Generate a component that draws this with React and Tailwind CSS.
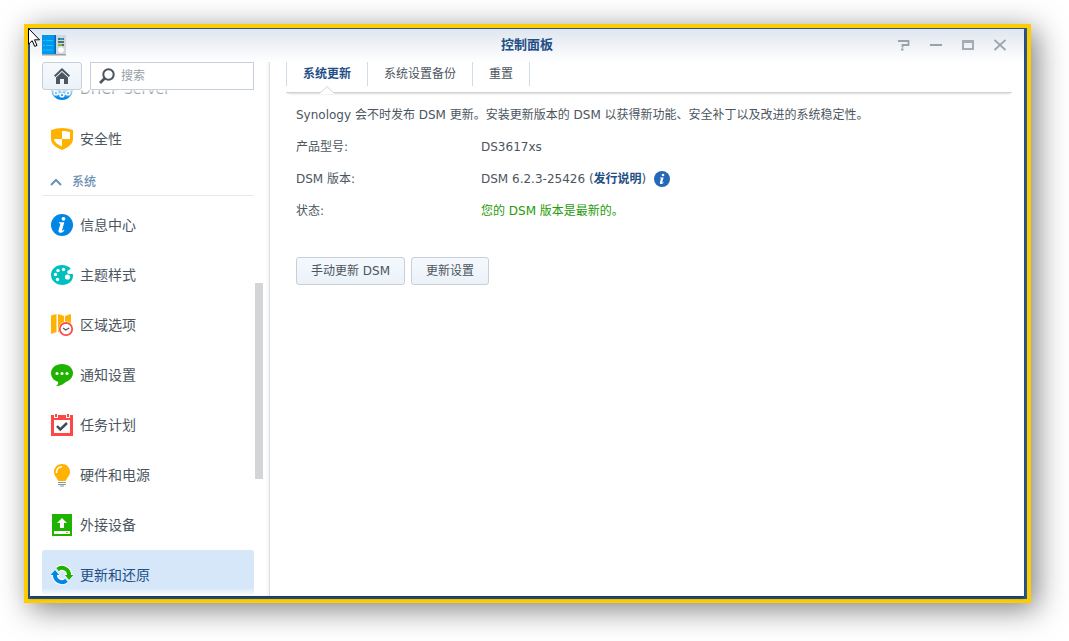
import { useLayoutEffect, useRef, useState } from "react"

const DhcpIcon = () => (
  <svg viewBox="0 0 24 24" className="size-6 shrink-0" aria-hidden="true">
    <circle cx="12" cy="12" r="11" fill="#0086e5" />
    <path d="m3 12 3 4 6 2 6-2 3-4M12 6v9" fill="none" stroke="#fff" strokeWidth="1.300" />
    <g fill="#0086e5" stroke="#fff" strokeWidth="1.400">
      <circle cx="6" cy="16" r="1.900" />
      <circle cx="12" cy="18" r="1.900" />
      <circle cx="18" cy="16" r="1.900" />
    </g>
  </svg>
)

const ShieldIcon = () => (
  <svg viewBox="0 0 24 24" className="size-6 shrink-0" aria-hidden="true">
    <path d="M1 3c4-1.300 7.500-2 11-2s7 .7 11 2v9c0 5-5 8.500-11 11-6-2.500-11-6-11-11z" fill="#ffb300" />
    <path d="M12 4c3 0 5.500.4 8 1.100V12h-8zM12 12v7.500c-4-1.700-7.500-4-8-7.500z" fill="#fff" />
  </svg>
)

const InfoIcon = () => (
  <svg viewBox="0 0 24 24" className="size-6 shrink-0" aria-hidden="true">
    <circle cx="12" cy="12" r="11" fill="#0086e5" />
    <circle cx="13.500" cy="5.800" r="1.900" fill="#fff" />
    <path
      d="M9 9.300h5.300l-2.200 7.900c-.2.800.5.800 1.700-.4l.7.6c-1.400 1.700-2.800 2.300-4.200 2.300-1.600 0-2.100-.9-1.700-2.500l1.700-6.200c.2-.7-.1-.8-1.500-.8z"
      fill="#fff"
    />
  </svg>
)

const PaletteIcon = () => (
  <svg viewBox="0 0 24 24" className="size-6 shrink-0" aria-hidden="true">
    <path
      d="M12 2C5.500 2 1 6.500 1 12s5 10 11.500 10C18 22 23 18.500 23 12.500c0-.6-.1-1-.2-1.500-1.600 0-3 .3-4.300-.1-1.500-.6-1.700-2.200-.7-3.200.8-.8 1.900-1.500 3-2C18.700 3.300 15.500 2 12 2z"
      fill="#00bfbf"
    />
    <g fill="#fff">
      <circle cx="8" cy="7.500" r="1.700" />
      <circle cx="13.500" cy="6.500" r="1.700" />
      <circle cx="5.500" cy="11.500" r="1.700" />
      <circle cx="7.500" cy="16.500" r="1.700" />
      <circle cx="17.500" cy="14" r="2.600" />
    </g>
  </svg>
)

const RegionIcon = () => (
  <svg viewBox="0 0 24 24" className="size-6 shrink-0" aria-hidden="true">
    <path d="M1 2.500 6.500 1v18L1 21zM8 1l6 2v17l-6-1zM15 3l6-2v16l-6 3z" fill="#ffb300" />
    <circle cx="16" cy="16" r="7.500" fill="#fff" />
    <circle cx="16" cy="16" r="6.200" fill="#fff" stroke="#ff4747" strokeWidth="1.700" />
    <path d="m13 15 2.700 2 3.500-2" fill="none" stroke="#505a64" strokeWidth="1.300" />
  </svg>
)

const ChatIcon = () => (
  <svg viewBox="0 0 24 24" className="size-6 shrink-0" aria-hidden="true">
    <path
      d="M12 1c6.200 0 11 3.900 11 9 0 4-2.600 7-6.500 8.700-2.800 1.300-4.500 4.300-10.500 4.300 1.800-1 2.300-2.500 2.300-4C3.700 17.500 1 14.300 1 10c0-5.100 4.800-9 11-9z"
      fill="#1fb300"
    />
    <g fill="#fff">
      <circle cx="7" cy="10.500" r="1.500" />
      <circle cx="12" cy="10.500" r="1.500" />
      <circle cx="17" cy="10.500" r="1.500" />
    </g>
  </svg>
)

const CalendarIcon = () => (
  <svg viewBox="0 0 24 24" className="size-6 shrink-0" aria-hidden="true">
    <path d="M1 2h22v21H1z" fill="#ff4747" />
    <path d="M4 7h16v13H4z" fill="#fff" />
    <path d="M4 1h4v4H4zM16 1h4v4h-4z" fill="#fff" />
    <path d="M5 1h2v3H5zM17 1h2v3h-2z" fill="#ff4747" />
    <path d="m7 13 3.300 3.500L17 10" fill="none" stroke="#414b55" strokeWidth="2.500" />
  </svg>
)

const BulbIcon = () => (
  <svg viewBox="0 0 24 24" className="size-6 shrink-0" aria-hidden="true">
    <path
      d="M12 1c-4.600 0-8 3.400-8 7.900 0 3.600 2.400 4.900 3.600 7.600.4 1 .6 1.500 1.400 1.500h6c.8 0 1-.5 1.400-1.500C17.600 13.800 20 12.500 20 8.900 20 4.400 16.600 1 12 1z"
      fill="#ffb300"
    />
    <path d="M6.500 9.500c0-3 2-5.500 5-5.800" fill="none" stroke="#fff" strokeWidth="1.600" strokeLinecap="round" />
    <path d="M8 19.500h8M8 21.500h8M10 23h4" stroke="#8b969f" strokeWidth="1" />
  </svg>
)

const ExternalIcon = () => (
  <svg viewBox="0 0 24 24" className="size-6 shrink-0" aria-hidden="true">
    <path d="M2 1h20v22H2z" fill="#1fb300" />
    <path d="M4 18h16v3H4z" fill="#fff" />
    <path d="M16 19h2v1h-2z" fill="#ff9d00" />
    <path d="m12 5 5 5h-3v5h-4v-5H7z" fill="#fff" />
  </svg>
)

const UpdateIcon = () => (
  <svg viewBox="0 0 24 24" className="size-6 shrink-0" aria-hidden="true">
    <g fill="none" stroke="#fff" strokeWidth="6">
      <path d="M7.500 6.600A7 7 0 0 1 19 12M16.500 17.400A7 7 0 0 1 5 12" />
    </g>
    <g fill="none" stroke="#fff" strokeWidth="1.600" strokeLinejoin="round">
      <path d="M15 12h8l-4 4.500zM9 12H1l4-4.500z" />
    </g>
    <path d="M7.500 6.600A7 7 0 0 1 19 12.500" fill="none" stroke="#1fb300" strokeWidth="4" />
    <path d="M14.800 12h8.700L19 17z" fill="#1fb300" />
    <path d="M16.500 17.400A7 7 0 0 1 5 11.500" fill="none" stroke="#0086e5" strokeWidth="4" />
    <path d="M9.200 12H.5L5 7z" fill="#0086e5" />
  </svg>
)

const ControlPanelIcon = () => (
  <svg viewBox="0 0 24 21" className="ml-1 h-[21px] w-6" aria-hidden="true">
    <path d="M0 19h24v1.500H0z" fill="#9aa3aa" />
    <path d="M14 0h10v19H14z" fill="#cfd8df" />
    <path d="M0 0h14v19H0z" fill="#0098ec" />
    <path d="M12.500 0H14v19h-1.500z" fill="#0068b5" />
    <path d="M1 5.500h2M1 10.500h2M1 15h2M4 5.500h7M4 10.500h7M4 15h7" stroke="#1cc0ff" strokeWidth="1" />
    <path d="M16 4h6M16 7h6M16 10h6" stroke="#37474f" strokeWidth="1.500" />
    <path d="M18 4h3" stroke="#00b7ff" strokeWidth="1.500" />
    <path d="M16 10h4" stroke="#7be000" strokeWidth="1.500" />
    <circle cx="19" cy="15" r="2.800" fill="#fff" />
  </svg>
)

const menu = [
  { id: "dhcp", label: "DHCP Server", icon: DhcpIcon },
  { id: "security", label: "安全性", icon: ShieldIcon },
]

const systemMenu = [
  { id: "info", label: "信息中心", icon: InfoIcon },
  { id: "theme", label: "主题样式", icon: PaletteIcon },
  { id: "region", label: "区域选项", icon: RegionIcon },
  { id: "notification", label: "通知设置", icon: ChatIcon },
  { id: "task", label: "任务计划", icon: CalendarIcon },
  { id: "power", label: "硬件和电源", icon: BulbIcon },
  { id: "external", label: "外接设备", icon: ExternalIcon },
  { id: "update", label: "更新和还原", icon: UpdateIcon },
]

const tabs = ["系统更新", "系统设置备份", "重置"]

const MenuItem = ({ item, active, onSelect }) => {
  const Icon = item.icon
  return (
    <button
      type="button"
      onClick={() => onSelect(item.id)}
      className={`flex h-[50px] w-full shrink-0 items-center gap-[6px] rounded-[3px] px-2 text-left text-sm ${
        active ? "bg-[#d6e7f9] text-[#1f4f87]" : "text-[#4b5560]"
      }`}
    >
      <Icon />
      {item.label}
    </button>
  )
}

const Sidebar = () => {
  const [selected, setSelected] = useState("update")
  const [open, setOpen] = useState(true)
  const listRef = useRef(null)

  useLayoutEffect(() => {
    listRef.current.scrollTop = 26
  }, [])

  return (
    <aside className="flex w-60 shrink-0 flex-col border-r border-[#dcdfe2] pl-3 shadow-[inset_-2px_0_2px_rgba(0,0,0,0.04)]">
      <div className="flex gap-2 pr-[15px]">
        <button
          type="button"
          aria-label="主页"
          className="flex h-7 w-10 items-center justify-center rounded-[3px] border border-[#c5d0dc] bg-linear-to-b from-[#f5f9fd] to-[#ebf2f8]"
        >
          <svg viewBox="0 0 16 16" className="size-4" aria-hidden="true">
            <path d="M8 0 16 7.500 14.700 9 8 2.700 1.300 9 0 7.500z" fill="#4b5660" />
            <path d="m8 4 6 5.600V16h-4v-5H6v5H2V9.600z" fill="#4b5660" />
          </svg>
        </button>
        <label className="flex h-7 min-w-0 flex-1 items-center gap-[6px] border border-[#c5d0dc] bg-white pl-2">
          <svg viewBox="0 0 16 16" className="size-4 shrink-0" aria-hidden="true">
            <circle cx="9.500" cy="6.500" r="5.200" fill="none" stroke="#4b5660" strokeWidth="2" />
            <path d="m5.500 10.500-4.500 4.500" stroke="#4b5660" strokeWidth="2.600" />
          </svg>
          <input
            type="text"
            aria-label="搜索"
            placeholder="搜索"
            className="min-w-0 flex-1 text-xs outline-none placeholder:text-[#969ea6]"
          />
        </label>
      </div>

      <div className="relative flex min-h-0 flex-1">
        <nav ref={listRef} className="min-w-0 flex-1 overflow-y-auto [scrollbar-width:none]">
          {menu.map((item) => (
            <MenuItem key={item.id} item={item} active={selected === item.id} onSelect={setSelected} />
          ))}
          <button
            type="button"
            onClick={() => setOpen(!open)}
            aria-expanded={open}
            className="mb-1 flex h-8 w-full items-center gap-[10px] border-b border-[#e6e9ec] pt-1 pl-2 text-xs font-medium text-[#6d90b3]"
          >
            <svg viewBox="0 0 12 8" className={`h-2 w-3 ${open ? "" : "rotate-180"}`} aria-hidden="true">
              <path d="m1 7 5-5 5 5" fill="none" stroke="#6d90b3" strokeWidth="2" />
            </svg>
            系统
          </button>
          {open &&
            systemMenu.map((item) => (
              <MenuItem key={item.id} item={item} active={selected === item.id} onSelect={setSelected} />
            ))}
        </nav>
        <div className="flex w-[15px] shrink-0 flex-col pl-px">
          <div className="h-[193px] shrink-0" />
          <div className="h-[196px] w-2 bg-[#d3d5d7]" />
        </div>
        <div className="pointer-events-none absolute top-0 left-0 h-2 w-[212px] bg-linear-to-b from-white/80 to-white/0" />
        <div className="pointer-events-none absolute bottom-0 left-0 h-2 w-[212px] bg-linear-to-t from-white to-white/0" />
      </div>
    </aside>
  )
}

const TitleBar = () => (
  <header className="grid h-[33px] shrink-0 grid-cols-[1fr_auto_1fr] items-center bg-linear-to-b from-[#dfe6ef] to-white px-2 pb-px">
    <ControlPanelIcon />
    <h1 className="text-[13px] font-bold text-[#1f4f87]">控制面板</h1>
    <div className="flex justify-end">
      <button type="button" aria-label="帮助" className="flex size-8 items-center justify-center">
        <svg viewBox="0 0 12 12" className="size-3" aria-hidden="true">
          <path d="M0 2h10.500v4H4.500v2.500M3 10.500h2.500" fill="none" stroke="#9aa2aa" strokeWidth="1.800" />
        </svg>
      </button>
      <button type="button" aria-label="最小化" className="flex size-8 items-center justify-center">
        <svg viewBox="0 0 12 12" className="size-3" aria-hidden="true">
          <path d="M0 6h12" stroke="#9aa2aa" strokeWidth="2" />
        </svg>
      </button>
      <button type="button" aria-label="最大化" className="flex size-8 items-center justify-center">
        <svg viewBox="0 0 12 12" className="size-3" aria-hidden="true">
          <path d="M0 1h12v10H0zM2 4v5h8V4z" fill="#a4acb6" fillRule="evenodd" />
        </svg>
      </button>
      <button type="button" aria-label="关闭" className="flex size-8 items-center justify-center">
        <svg viewBox="0 0 12 12" className="size-3" aria-hidden="true">
          <path d="m.5 1 11 10m0-10-11 10" stroke="#9aa2aa" strokeWidth="1.700" />
        </svg>
      </button>
    </div>
  </header>
)

const Tabs = () => {
  const [current, setCurrent] = useState(tabs[0])
  return (
    <div
      role="tablist"
      className="flex h-[31px] shrink-0 items-start border-b border-[#cfd2d5] shadow-[0_3px_2px_-2px_rgba(0,0,0,0.15)]"
    >
      {tabs.map((tab) => (
        <button
          key={tab}
          type="button"
          role="tab"
          aria-selected={current === tab}
          onClick={() => setCurrent(tab)}
          className={`relative h-6 border-l border-[#d0dce7] px-4 text-xs last:border-r ${
            current === tab ? "font-bold text-[#1f4f87]" : "text-[#4b5560]"
          }`}
        >
          {tab}
          {current === tab && (
            <svg viewBox="0 0 14 8" className="absolute top-6 left-1/2 h-2 w-[14px] -translate-x-1/2" aria-hidden="true">
              <path d="M0 8V6.500h1l6-6 6 6h1V8z" fill="#fff" />
              <path d="M0 6.500h1l6-6 6 6h1" fill="none" stroke="#cfd2d5" />
            </svg>
          )}
        </button>
      ))}
    </div>
  )
}

const Row = ({ label, children }) => (
  <div className="flex min-h-8 items-center">
    <dt className="w-[185px] shrink-0">{label}</dt>
    <dd className="flex items-center">{children}</dd>
  </div>
)

const actionClass =
  "h-7 rounded-[3px] border border-[#c5d0dc] bg-linear-to-b from-[#f5f9fd] to-[#ebf2f8] px-[14px] whitespace-nowrap"

const UpdatePanel = () => (
  <main className="min-w-0 flex-1 pr-3 pl-4">
    <Tabs />
    <section className="px-[10px] pt-[6px] text-xs text-[#4b5560]">
      <p className="flex min-h-8 items-center">
        Synology 会不时发布 DSM 更新。安装更新版本的 DSM 以获得新功能、安全补丁以及改进的系统稳定性。
      </p>
      <dl>
        <Row label="产品型号:">DS3617xs</Row>
        <Row label="DSM 版本:">
          <span>
            DSM 6.2.3-25426 (
            <a href="#release-notes" className="font-bold text-[#1f4f87]">
              发行说明
            </a>
            )
          </span>
          <svg viewBox="0 0 16 16" className="ml-2 size-4" aria-hidden="true">
            <circle cx="8" cy="8" r="8" fill="#2468b8" />
            <circle cx="9" cy="4" r="1.300" fill="#fff" />
            <path d="M6 6.500h3.600l-1.400 4.900c-.1.500.4.400 1.100-.3l.4.400c-.9 1.200-1.900 1.700-2.900 1.600-.9-.1-1.100-.7-.9-1.600l1-3.800c.1-.5-.1-.5-.9-.5z" fill="#fff" />
          </svg>
        </Row>
        <Row label="状态:">
          <span className="text-[#259b08]">您的 DSM 版本是最新的。</span>
        </Row>
      </dl>
      <div className="mt-[30px] flex gap-[6px]">
        <button type="button" className={actionClass}>
          手动更新 DSM
        </button>
        <button type="button" className={actionClass}>
          更新设置
        </button>
      </div>
    </section>
  </main>
)

const App = () => (
  <div className="flex h-screen bg-white pt-6 pr-[38px] pb-[38px] pl-6 font-['DejaVu_Sans','Noto_Sans_CJK_SC',sans-serif]">
    <div className="relative flex min-w-0 flex-1 border-4 border-[#ffcc00] bg-[#2b5a94] pt-px pr-[3px] pb-[3px] pl-[2px] shadow-[6px_6px_28px_rgba(0,0,0,0.5)]">
      <div className="flex min-w-0 flex-1 flex-col bg-white shadow-[0_2px_3px_rgba(0,0,0,0.4)]">
        <TitleBar />
        <div className="flex min-h-0 flex-1">
          <Sidebar />
          <UpdatePanel />
        </div>
      </div>
      {/* mouse pointer */}
      <svg viewBox="0 0 12 19" className="pointer-events-none absolute top-0 left-0 h-[19px] w-3" aria-hidden="true">
        <path d="M.5.500v15.700l3.700-3.500 2.500 5.700 2.300-1-2.500-5.600h5z" fill="#fff" stroke="#000" />
      </svg>
    </div>
  </div>
)

export default App
